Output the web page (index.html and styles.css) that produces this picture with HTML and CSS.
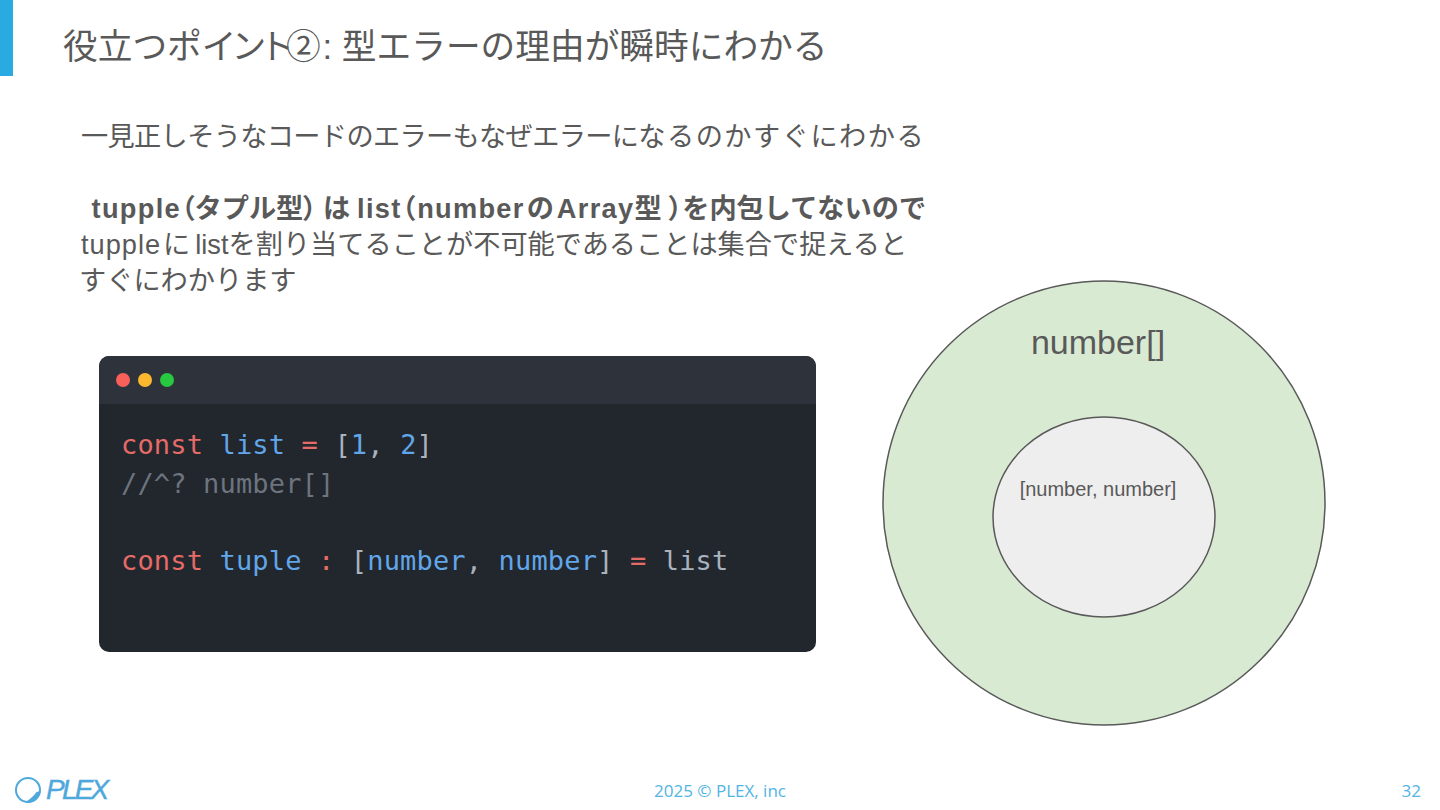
FILE: index.html
```html
<!DOCTYPE html>
<html lang="ja">
<head>
<meta charset="utf-8">
<title>役立つポイント②</title>
<link rel="stylesheet" href="styles.css">
</head>
<body>
<div class="slide">
  <header class="head">
    <div class="accent"></div>
    <h1 class="title">役立つポ<span class="k-i">イ</span><span class="k-n">ン</span><span class="k-t">ト</span><span class="k-c">②</span>: 型エラーの理由が瞬時にわかる</h1>
  </header>
  <section class="copy">
    <p class="lead"><span class="tight">一見正しそうなコードのエラーもなぜエラーに</span><span class="wide">なるのかすぐにわかる</span></p>
    <p class="strong">&nbsp;<span class="la first">tupple</span><span class="paren">（</span>タプル型<span class="paren">）</span><span class="ha">は</span><span class="la lst">list</span><span class="paren">（</span><span class="la num">number</span><span class="no">の</span><span class="la arr">Array</span>型<span class="paren pr">）</span>を内包してないので</p>
    <p class="line"><span class="la-r">tupple</span><span class="ni">に</span><span class="ls">list</span>を割り当てることが不可能であることは集合で捉えると</p>
    <p class="line last">すぐにわかります</p>
  </section>
  <section class="window">
    <div class="bar">
      <span class="dot red"></span><span class="dot yellow"></span><span class="dot green"></span>
    </div>
    <pre class="code"><span class="kw">const</span> <span class="id">list</span> <span class="kw">=</span> [<span class="id">1</span>, <span class="id">2</span>]
<span class="cm">//^? number[]</span>

<span class="kw">const</span> <span class="id">tuple</span> <span class="kw">:</span> [<span class="id">number</span>, <span class="id">number</span>] <span class="kw">=</span> list</pre>
  </section>
  <svg class="venn" width="446" height="448" viewBox="0 0 446 448">
    <ellipse cx="223" cy="223" rx="221" ry="222" fill="#d9ead3" stroke="#595959" stroke-width="1.5"/>
    <ellipse cx="223" cy="237" rx="111" ry="100" fill="#eeeeee" stroke="#595959" stroke-width="1.5"/>
    <text class="venn-big" x="217" y="74" text-anchor="middle">number[]</text>
    <text class="venn-small" x="217" y="216" text-anchor="middle">[number, number]</text>
  </svg>
  <footer class="foot">
    <div class="logo">
      <svg width="28" height="28" viewBox="0 0 28 28">
        <circle cx="14" cy="14" r="12" fill="none" stroke="#4ea8dc" stroke-width="2"/>
        <path d="M22.5 16 L26.5 15 C26 21 21 26.5 14 27 L12.5 25.5 C16 23 20 20 22.5 16 Z" fill="#4ea8dc"/>
      </svg>
      <span class="logo-text">PLEX</span>
    </div>
    <div class="copyright">2025 © PLEX, inc</div>
    <div class="page">32</div>
  </footer>
</div>
</body>
</html>
```
FILE: styles.css
```css
* { box-sizing: border-box; }
html, body { margin: 0; padding: 0; background: #fff; }
body { font-family: "Liberation Sans", "Noto Sans CJK JP", sans-serif; color: #595959; }
.slide { position: relative; width: 1440px; height: 810px; overflow: hidden; display: flex; flex-direction: column; }
.head { display: flex; height: 76px; flex: none; }
.accent { width: 13px; height: 76px; background: #29abe2; }
.title { margin: 0 0 0 50px; font-size: 34.7px; font-weight: 400; line-height: 94px; height: 76px; white-space: nowrap; }
.k-i { letter-spacing: -5px; }
.k-n { letter-spacing: -7px; }
.k-t { letter-spacing: -8px; }
.k-c { letter-spacing: 2px; }
.copy { padding: 43px 0 0 81px; font-size: 27.2px; }
.copy p { margin: 0; line-height: 36px; white-space: nowrap; }
.copy .lead { margin-bottom: 36px; }
.copy .last { margin-left: -2px; }
.tight { letter-spacing: -0.65px; }
.wide { letter-spacing: 1.5px; }
.strong { font-weight: 700; }
.la { letter-spacing: 1.3px; }
.first { margin-left: 3px; }
.paren { font-feature-settings: "palt"; }
.ha { margin-left: 6px; }
.lst { margin-left: 7px; }
.num { margin-left: 2px; }
.no { margin-left: 2px; }
.arr { margin-left: 3px; }
.pr { margin-left: 7px; }
.la-r { letter-spacing: 1px; }
.ni { margin-left: 2px; }
.ls { margin-left: 5px; }
.window { width: 717px; height: 296px; margin: 57px 0 0 99px; border-radius: 10px; background: #22262d; overflow: hidden; flex: none; }
.bar { height: 48px; background: #2e323a; display: flex; align-items: center; gap: 8px; padding-left: 17px; }
.dot { width: 14px; height: 14px; border-radius: 50%; }
.red { background: #f9605a; }
.yellow { background: #fbb82e; }
.green { background: #28c840; }
.code { margin: 0; padding: 22px 0 0 22px; font-family: "DejaVu Sans Mono", monospace; font-size: 27px; letter-spacing: 0.16px; line-height: 38.6px; color: #a9b3bd; }
.kw { color: #e56b67; }
.id { color: #61a6e8; }
.cm { color: #6c747d; }
.venn { position: absolute; left: 881px; top: 280px; }
.venn-big { font-size: 34px; fill: #595959; }
.venn-small { font-size: 20px; fill: #595959; }
.foot { margin-top: auto; height: 40px; flex: none; display: grid; grid-template-columns: 1fr 1fr 1fr; align-items: center; color: #52b4e4; font-family: "Open Sans", sans-serif; font-size: 17px; }
.logo { display: flex; align-items: center; gap: 4px; margin-left: 14px; }
.logo-text { font-family: "Liberation Sans", sans-serif; font-style: italic; font-size: 28px; letter-spacing: -2.8px; color: #4ea8dc; -webkit-text-stroke: 0.4px #4ea8dc; line-height: 1; }
.copyright { text-align: center; }
.page { text-align: right; margin-right: 19px; }
```
